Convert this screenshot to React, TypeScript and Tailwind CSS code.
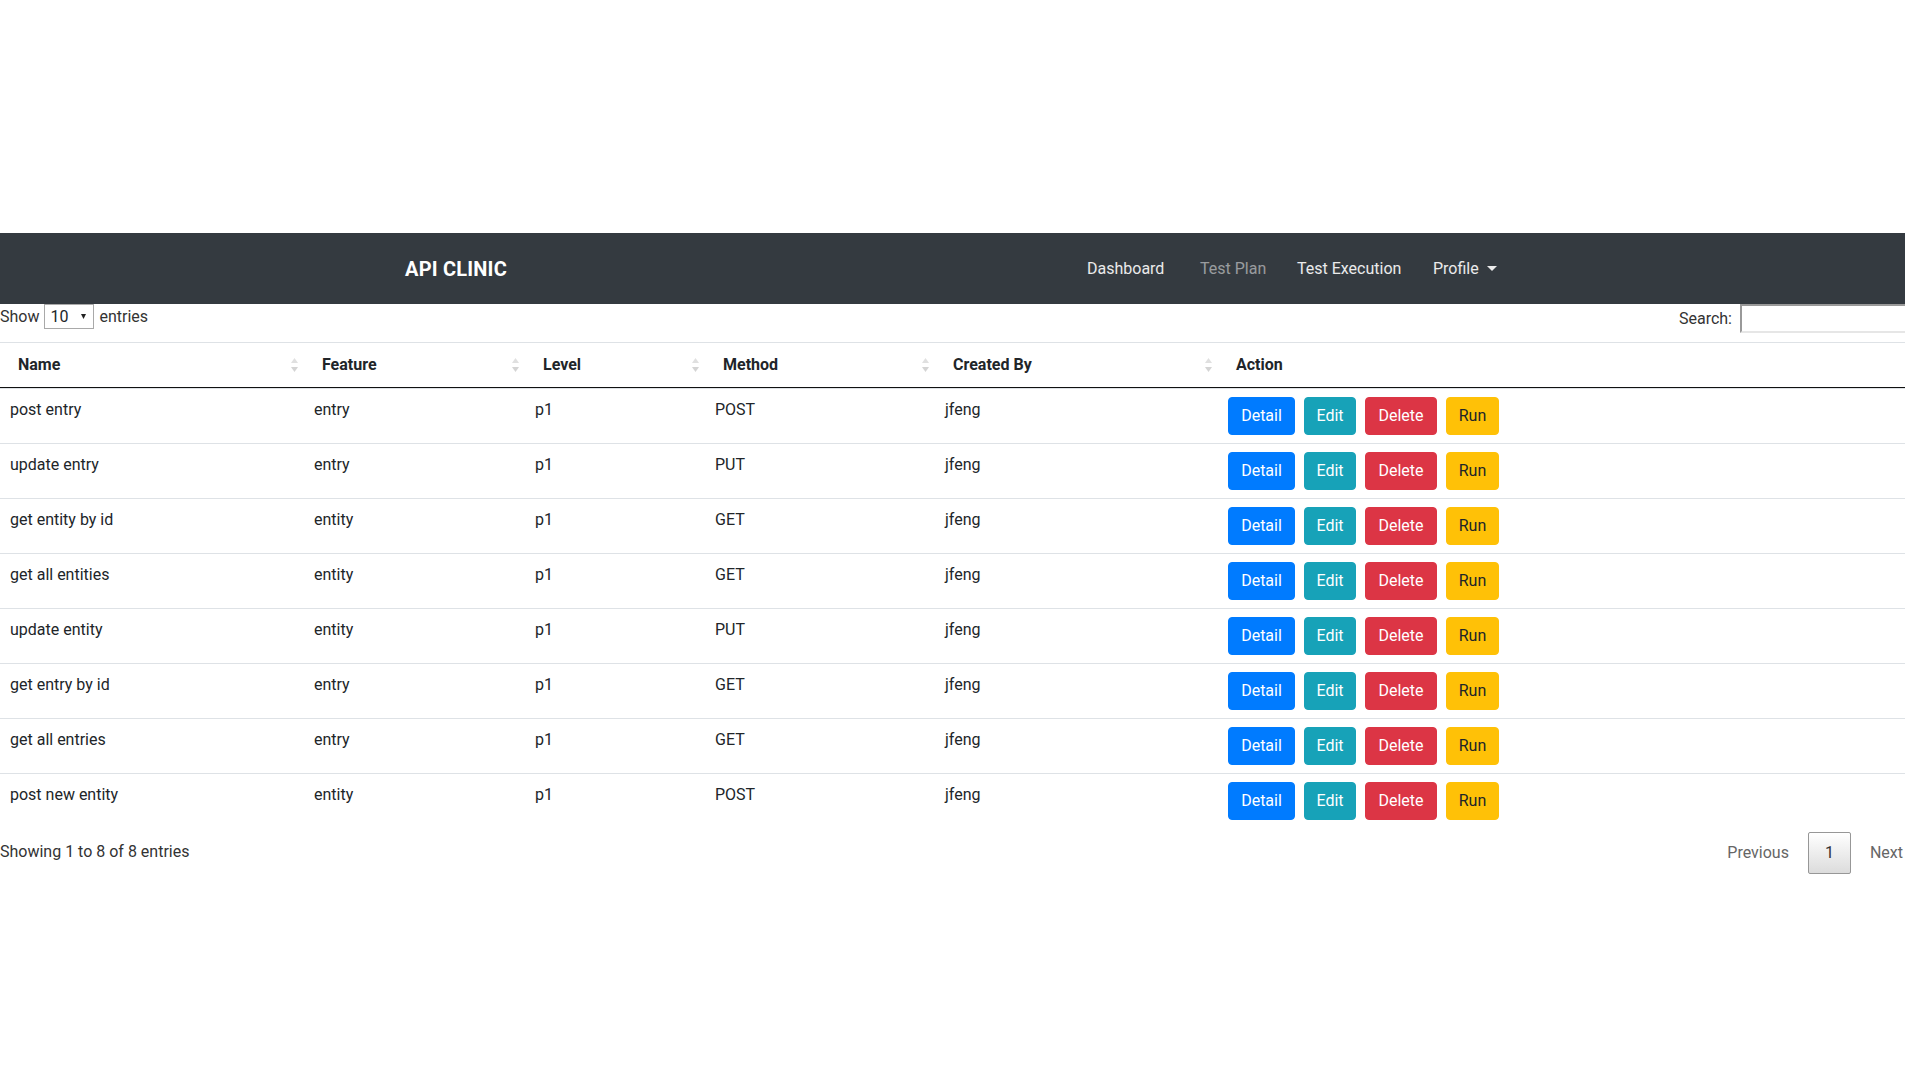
import React from "react";

interface TestCase {
  name: string;
  feature: string;
  level: string;
  method: string;
  createdBy: string;
}

const cases: TestCase[] = [
  { name: "post entry", feature: "entry", level: "p1", method: "POST", createdBy: "jfeng" },
  { name: "update entry", feature: "entry", level: "p1", method: "PUT", createdBy: "jfeng" },
  { name: "get entity by id", feature: "entity", level: "p1", method: "GET", createdBy: "jfeng" },
  { name: "get all entities", feature: "entity", level: "p1", method: "GET", createdBy: "jfeng" },
  { name: "update entity", feature: "entity", level: "p1", method: "PUT", createdBy: "jfeng" },
  { name: "get entry by id", feature: "entry", level: "p1", method: "GET", createdBy: "jfeng" },
  { name: "get all entries", feature: "entry", level: "p1", method: "GET", createdBy: "jfeng" },
  { name: "post new entity", feature: "entity", level: "p1", method: "POST", createdBy: "jfeng" },
];

function SortIcon() {
  return (
    <svg width="7" height="14" viewBox="0 0 7 14" className="shrink-0">
      <path d="M3.5 0 L7 5 L0 5 Z" fill="#e0e0e0" />
      <path d="M0 9 L7 9 L3.5 14 Z" fill="#d4d4d4" />
    </svg>
  );
}

function HeaderCell({ label, sortable = true }: { label: string; sortable?: boolean }) {
  return (
    <th className="border-t border-b border-t-[#dee2e6] border-b-[#111] p-0 text-left font-bold">
      <div className="flex items-center justify-between pl-[18px] pr-[6px] py-[10px] leading-6">
        <span>{label}</span>
        {sortable && <SortIcon />}
      </div>
    </th>
  );
}

export default function App() {
  return (
    <div className="flex min-h-screen bg-white font-['Roboto','Liberation_Sans',sans-serif] text-[16px] text-[#212529]">
      <div className="w-[1905px] shrink-0 overflow-hidden">
        <div className="w-[1920px]">
          {/* empty band above the navbar */}
          <div className="h-[233px]" />

          {/* Navbar */}
          <nav className="flex h-[71px] items-center bg-[#343a40]">
            <div className="mx-auto flex w-[1140px] items-center justify-between px-[15px]">
              <span className="text-[20px] font-bold leading-[30px] tracking-[0.2px] text-white">API CLINIC</span>
              <ul className="flex items-center whitespace-nowrap leading-6">
                <li className="w-[113px] px-[18px] text-white/90">Dashboard</li>
                <li className="w-[97px] px-[18px] text-white/50">Test Plan</li>
                <li className="w-[136px] px-[18px] text-white/90">Test Execution</li>
                <li className="flex items-center px-[18px] text-white/90">
                  <span className="w-[44px]">Profile</span>
                  <span className="ml-[10px] inline-block border-x-[5px] border-t-[5px] border-x-transparent border-t-white/90" />
                </li>
              </ul>
            </div>
          </nav>

          {/* Length + filter controls */}
          <div className="flex h-[29px] items-start justify-between text-[#333]">
            <div className="flex h-[25px] items-center leading-6">
              <span>Show</span>
              <div className="mx-[5px] flex h-[25px] w-[50px] items-center justify-between border border-[#a9a9a9] pl-[5px] pr-[7px] text-[#212529]">
                <span>10</span>
                <svg width="5" height="5" viewBox="0 0 5 5">
                  <path d="M0 0 L5 0 L2.5 5 Z" fill="#222" />
                </svg>
              </div>
              <span>entries</span>
            </div>
            <div className="flex h-[29px] items-center leading-6">
              <span>Search:</span>
              <input
                type="text"
                className="ml-2 h-[29px] w-[180px] border-2 border-t-[#999] border-l-[#999] border-b-[#e6e6e6] border-r-[#e6e6e6] bg-white outline-none"
              />
            </div>
          </div>

          {/* Table */}
          <table className="mt-[9px] w-full table-fixed border-separate border-spacing-0">
            <colgroup>
              <col className="w-[304px]" />
              <col className="w-[221px]" />
              <col className="w-[180px]" />
              <col className="w-[230px]" />
              <col className="w-[283px]" />
              <col />
            </colgroup>
            <thead>
              <tr>
                <HeaderCell label="Name" />
                <HeaderCell label="Feature" />
                <HeaderCell label="Level" />
                <HeaderCell label="Method" />
                <HeaderCell label="Created By" />
                <HeaderCell label="Action" sortable={false} />
              </tr>
            </thead>
            <tbody>
              {cases.map((c) => (
                <tr key={c.name}>
                  <td className="border-t border-[#dee2e6] px-[10px] pt-[9px] pb-2 align-top leading-6">{c.name}</td>
                  <td className="border-t border-[#dee2e6] px-[10px] pt-[9px] pb-2 align-top leading-6">{c.feature}</td>
                  <td className="border-t border-[#dee2e6] px-[10px] pt-[9px] pb-2 align-top leading-6">{c.level}</td>
                  <td className="border-t border-[#dee2e6] px-[10px] pt-[9px] pb-2 align-top leading-6">{c.method}</td>
                  <td className="border-t border-[#dee2e6] px-[10px] pt-[9px] pb-2 align-top leading-6">{c.createdBy}</td>
                  <td className="border-t border-[#dee2e6] px-[10px] py-2 align-top">
                    <div className="flex gap-[9px] leading-6">
                      <button className="h-[38px] w-[67px] rounded border border-[#007bff] bg-[#007bff] text-white">Detail</button>
                      <button className="h-[38px] w-[52px] rounded border border-[#17a2b8] bg-[#17a2b8] text-white">Edit</button>
                      <button className="h-[38px] w-[72px] rounded border border-[#dc3545] bg-[#dc3545] text-white">Delete</button>
                      <button className="h-[38px] w-[53px] rounded border border-[#ffc107] bg-[#ffc107] text-[#212529]">Run</button>
                    </div>
                  </td>
                </tr>
              ))}
            </tbody>
          </table>

          {/* Info + pagination */}
          <div className="flex items-start justify-between text-[#333]">
            <div className="pt-3 leading-6">Showing 1 to 8 of 8 entries</div>
            <div className="flex items-center pt-1 leading-6">
              <span className="border border-transparent px-4 py-2 text-[#666]">Previous</span>
              <span className="ml-[2px] rounded-[2px] border border-[#979797] bg-gradient-to-b from-white to-[#dcdcdc] px-4 py-2 text-[#333]">1</span>
              <span className="ml-[2px] border border-transparent px-4 py-2 text-[#666]">Next</span>
            </div>
          </div>
        </div>
      </div>
      <div className="w-[15px] shrink-0 bg-white" />
    </div>
  );
}
